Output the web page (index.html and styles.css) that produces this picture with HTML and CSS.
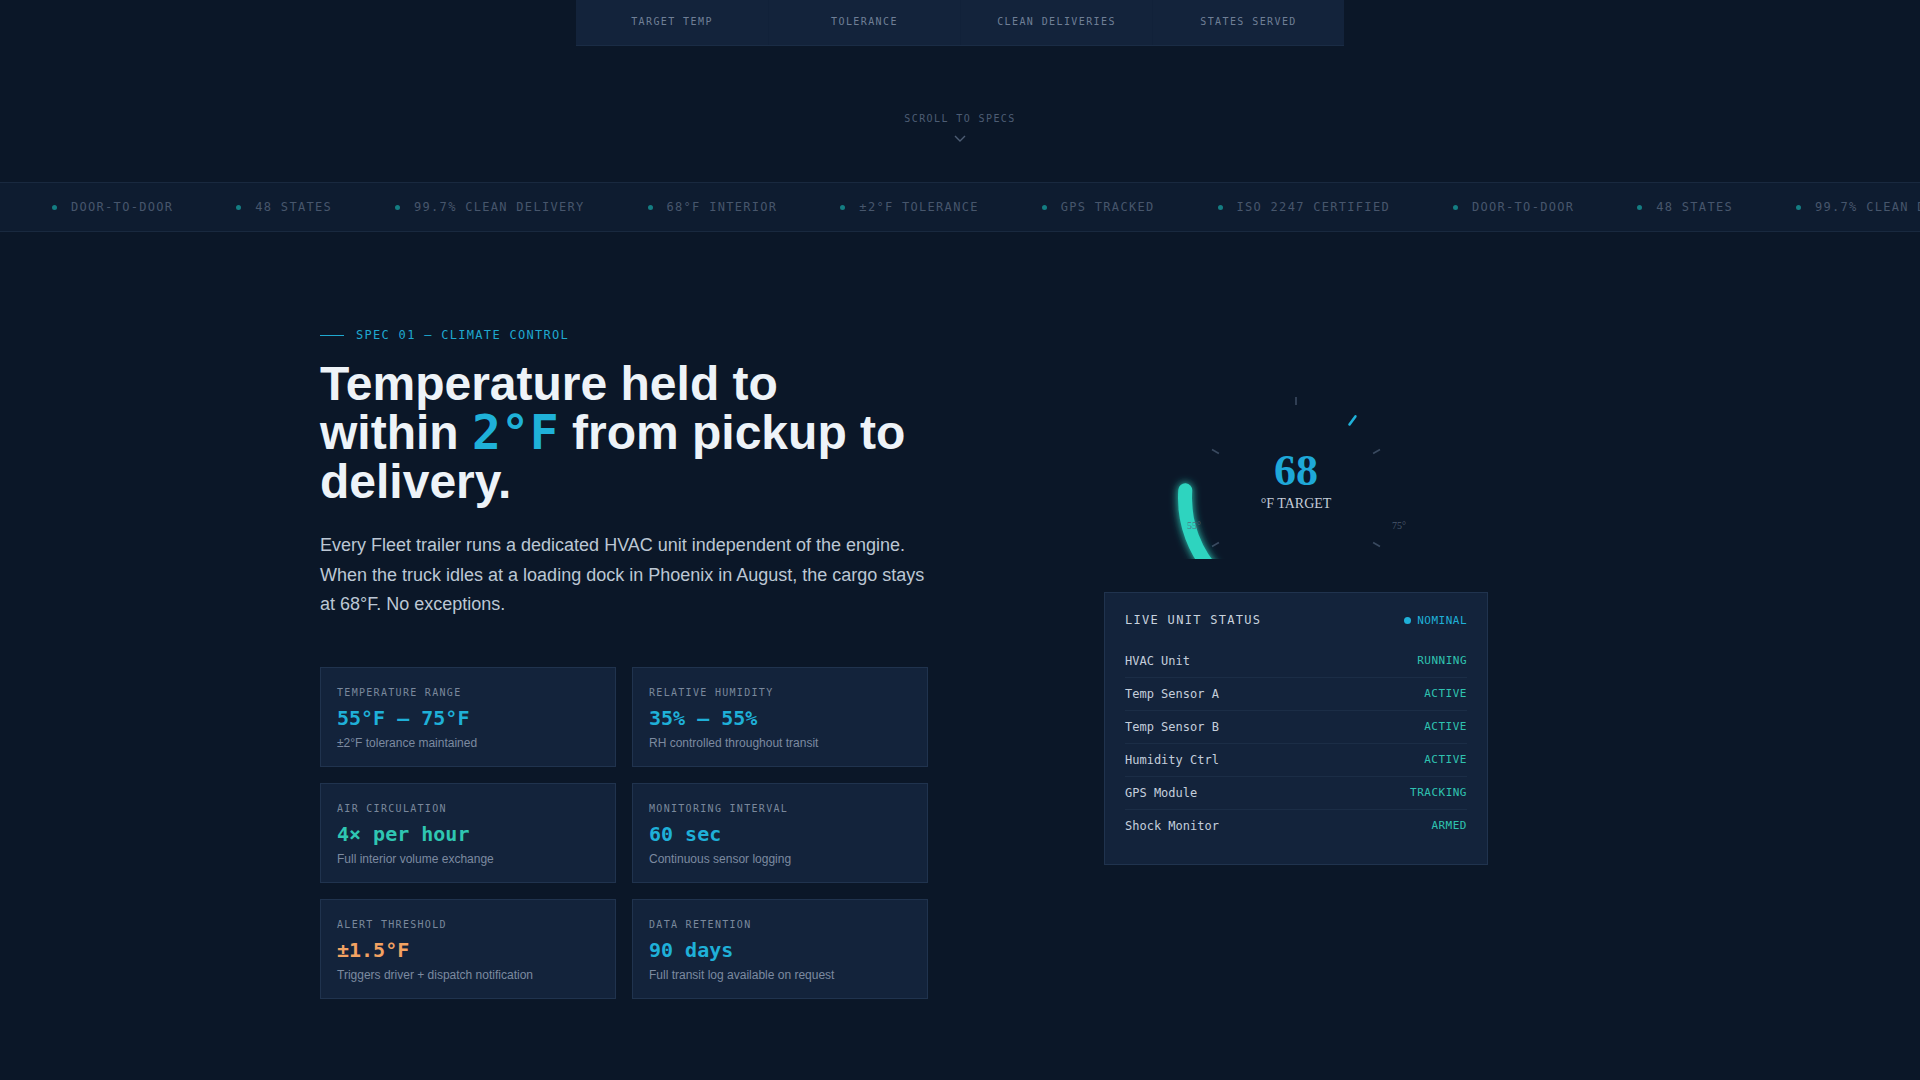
FILE: index.html
```html
<!DOCTYPE html>
<html lang="en">
<head>
<meta charset="utf-8">
<title>Fleet — Climate Control</title>
<link rel="stylesheet" href="styles.css">
</head>
<body>
<div class="stats">
  <div class="stat">TARGET TEMP</div>
  <div class="stat">TOLERANCE</div>
  <div class="stat">CLEAN DELIVERIES</div>
  <div class="stat">STATES SERVED</div>
</div>

<div class="scroll">
  <div class="scroll-label">SCROLL TO SPECS</div>
  <svg class="chev" width="12" height="7" viewBox="0 0 12 7"><polyline points="1,1 6,6 11,1" fill="none" stroke="#4d5d74" stroke-width="1.4"/></svg>
</div>

<div class="ticker">
  <div class="track">
    <span class="tk"><i></i>DOOR-TO-DOOR</span>
    <span class="tk"><i></i>48 STATES</span>
    <span class="tk"><i></i>99.7% CLEAN DELIVERY</span>
    <span class="tk"><i></i>68°F INTERIOR</span>
    <span class="tk"><i></i>±2°F TOLERANCE</span>
    <span class="tk"><i></i>GPS TRACKED</span>
    <span class="tk"><i></i>ISO 2247 CERTIFIED</span>
    <span class="tk"><i></i>DOOR-TO-DOOR</span>
    <span class="tk"><i></i>48 STATES</span>
    <span class="tk"><i></i>99.7% CLEAN DELIVERY</span>
    <span class="tk"><i></i>68°F INTERIOR</span>
  </div>
</div>

<section class="spec">
  <div class="left">
    <div class="eyebrow"><span class="rule"></span>SPEC 01 — CLIMATE CONTROL</div>
    <h1>Temperature held to within <span class="accent">2°F</span> from pickup to delivery.</h1>
    <p class="lead">Every Fleet trailer runs a dedicated HVAC unit independent of the engine. When the truck idles at a loading dock in Phoenix in August, the cargo stays at 68°F. No exceptions.</p>
    <div class="cards">
      <div class="card">
        <div class="c-label">TEMPERATURE RANGE</div>
        <div class="c-val cyan">55°F – 75°F</div>
        <div class="c-sub">±2°F tolerance maintained</div>
      </div>
      <div class="card">
        <div class="c-label">RELATIVE HUMIDITY</div>
        <div class="c-val cyan">35% – 55%</div>
        <div class="c-sub">RH controlled throughout transit</div>
      </div>
      <div class="card">
        <div class="c-label">AIR CIRCULATION</div>
        <div class="c-val teal">4× per hour</div>
        <div class="c-sub">Full interior volume exchange</div>
      </div>
      <div class="card">
        <div class="c-label">MONITORING INTERVAL</div>
        <div class="c-val cyan">60 sec</div>
        <div class="c-sub">Continuous sensor logging</div>
      </div>
      <div class="card">
        <div class="c-label">ALERT THRESHOLD</div>
        <div class="c-val orange">±1.5°F</div>
        <div class="c-sub">Triggers driver + dispatch notification</div>
      </div>
      <div class="card">
        <div class="c-label">DATA RETENTION</div>
        <div class="c-val cyan">90 days</div>
        <div class="c-sub">Full transit log available on request</div>
      </div>
    </div>
  </div>

  <div class="right">
    <svg class="gauge" width="300" height="170" viewBox="0 0 300 170">
      <defs>
        <filter id="glow" x="-50%" y="-50%" width="200%" height="200%">
          <feGaussianBlur stdDeviation="4" result="b"/>
          <feMerge><feMergeNode in="b"/><feMergeNode in="SourceGraphic"/></feMerge>
        </filter>
      </defs>
      <g stroke="#3a4a60" stroke-width="1.6">
        <line x1="150" y1="8" x2="150" y2="16"/>
        <line x1="66.0" y1="60.5" x2="72.9" y2="64.5"/>
        <line x1="234.0" y1="60.5" x2="227.1" y2="64.5"/>
        <line x1="66.0" y1="157.5" x2="72.9" y2="153.5"/>
        <line x1="234.0" y1="157.5" x2="227.1" y2="153.5"/>
      </g>
      <line x1="203.5" y1="35.5" x2="209.4" y2="27.4" stroke="#1fb0d8" stroke-width="2.6" stroke-linecap="round"/>
      <path d="M 71.51 187.49 A 111 111 0 0 1 39.27 101.26" fill="none" stroke="#2dd4bf" stroke-width="14" stroke-linecap="round" filter="url(#glow)"/>
      <text x="48" y="140" class="g-tick">55°</text>
      <text x="253" y="140" class="g-tick">75°</text>
      <text x="150" y="96" class="g-num">68</text>
      <text x="150" y="118.5" class="g-unit">°F TARGET</text>
    </svg>

    <div class="status">
      <div class="st-head">
        <span class="st-title">LIVE UNIT STATUS</span>
        <span class="st-nom"><i></i>NOMINAL</span>
      </div>
      <div class="row"><span>HVAC Unit</span><b>RUNNING</b></div>
      <div class="row"><span>Temp Sensor A</span><b>ACTIVE</b></div>
      <div class="row"><span>Temp Sensor B</span><b>ACTIVE</b></div>
      <div class="row"><span>Humidity Ctrl</span><b>ACTIVE</b></div>
      <div class="row"><span>GPS Module</span><b>TRACKING</b></div>
      <div class="row"><span>Shock Monitor</span><b>ARMED</b></div>
    </div>
  </div>
</section>
</body>
</html>
```

FILE: styles.css
```css
* { box-sizing: border-box; }

html, body {
  margin: 0;
  padding: 0;
  background: #0b1728;
}

body {
  font-family: "Liberation Sans", Arial, sans-serif;
  color: #e9eef5;
  min-height: 1080px;
  overflow: hidden;
}

.stats {
  width: 768px;
  margin: 0 auto;
  display: grid;
  grid-template-columns: repeat(4, 1fr);
  background: #13233b;
  border-bottom: 1px solid #1a2c45;
}

.stat {
  height: 45px;
  padding-top: 16px;
  text-align: center;
  font-family: "DejaVu Sans Mono", monospace;
  font-size: 10px;
  line-height: 12px;
  letter-spacing: 1.4px;
  color: #6f7f96;
}

.stat + .stat { border-left: 1px solid #112139; }

.scroll {
  margin-top: 66px;
  display: flex;
  flex-direction: column;
  align-items: center;
}

.scroll-label {
  font-family: "DejaVu Sans Mono", monospace;
  font-size: 10px;
  line-height: 14px;
  letter-spacing: 1.4px;
  color: #4d5d74;
}

.chev { margin-top: 9px; display: block; }

.ticker {
  margin-top: 40px;
  height: 50px;
  background: #0e1c30;
  border-top: 1px solid #19293f;
  border-bottom: 1px solid #19293f;
  overflow: hidden;
}

.track {
  height: 48px;
  display: flex;
  align-items: center;
  gap: 63px;
  padding-left: 52px;
  white-space: nowrap;
}

.tk {
  display: flex;
  align-items: center;
  gap: 14px;
  flex: none;
  font-family: "DejaVu Sans Mono", monospace;
  font-size: 12px;
  letter-spacing: 1.3px;
  color: #47566c;
}

.tk i {
  width: 5px;
  height: 5px;
  border-radius: 50%;
  background: #147d82;
  display: block;
}

.spec {
  width: 1280px;
  margin: 0 auto;
  padding-top: 94px;
  display: grid;
  grid-template-columns: 608px 608px;
  column-gap: 64px;
  align-items: start;
}

.eyebrow {
  display: flex;
  align-items: center;
  gap: 12px;
  font-family: "DejaVu Sans Mono", monospace;
  font-size: 12px;
  line-height: 18px;
  letter-spacing: 1.3px;
  color: #1fa8cf;
}

.eyebrow .rule {
  width: 24px;
  height: 1px;
  background: #1fa8cf;
}

h1 {
  margin: 15px 0 0;
  font-size: 48px;
  line-height: 49px;
  font-weight: 700;
  color: #eef3f8;
}

h1 .accent {
  font-family: "DejaVu Sans Mono", monospace;
  color: #1fb1d8;
}

.lead {
  margin: 25px 0 0;
  font-size: 18px;
  line-height: 29.6px;
  color: #bcc7d4;
}

.cards {
  margin-top: 47px;
  display: grid;
  grid-template-columns: 1fr 1fr;
  gap: 16px;
}

.card {
  background: #13233b;
  border: 1px solid #20334e;
  padding: 18px 16px 14px;
  height: 100px;
}

.c-label {
  font-family: "DejaVu Sans Mono", monospace;
  font-size: 10px;
  line-height: 14px;
  letter-spacing: 1.3px;
  color: #7a889c;
}

.c-val {
  margin-top: 4px;
  font-family: "DejaVu Sans Mono", monospace;
  font-weight: 700;
  font-size: 20px;
  line-height: 28px;
}

.cyan { color: #1fb0d8; }
.teal { color: #2fc6b2; }
.orange { color: #f3a262; }

.c-sub {
  margin-top: 2px;
  font-size: 12px;
  line-height: 18px;
  color: #7c8aa0;
}

.right {
  padding-top: 63px;
  display: flex;
  flex-direction: column;
  align-items: center;
}

.gauge { display: block; }

.g-num {
  font-family: "Liberation Serif", serif;
  font-weight: 700;
  font-size: 44px;
  fill: #1ea8d8;
  text-anchor: middle;
}

.g-unit {
  font-family: "Liberation Serif", serif;
  font-size: 14px;
  fill: #c3ccd8;
  text-anchor: middle;
}

.g-tick {
  font-family: "Liberation Serif", serif;
  font-size: 10px;
  fill: #55647a;
  fill-opacity: 0.85;
  text-anchor: middle;
}

.status {
  margin-top: 33px;
  width: 384px;
  background: #13233b;
  border: 1px solid #20334e;
  padding: 20px 20px 22px;
  font-family: "DejaVu Sans Mono", monospace;
}

.st-head {
  display: flex;
  justify-content: space-between;
  align-items: center;
  height: 14px;
  margin-bottom: 18px;
}

.st-title {
  font-size: 12px;
  letter-spacing: 1.3px;
  color: #c8d2de;
}

.st-nom {
  display: flex;
  align-items: center;
  gap: 6px;
  font-size: 11px;
  letter-spacing: 0.5px;
  color: #1fb0d8;
}

.st-nom i {
  width: 7px;
  height: 7px;
  border-radius: 50%;
  background: #1fb0d8;
  display: block;
}

.row {
  display: flex;
  justify-content: space-between;
  align-items: center;
  padding: 8px 0;
  line-height: 16px;
  border-bottom: 1px solid #1b2d46;
}

.row:last-child { border-bottom: none; }

.row span {
  font-size: 12px;
  color: #c4cedb;
}

.row b {
  font-weight: 400;
  font-size: 11px;
  letter-spacing: 0.5px;
  color: #2fc2b0;
}
```
